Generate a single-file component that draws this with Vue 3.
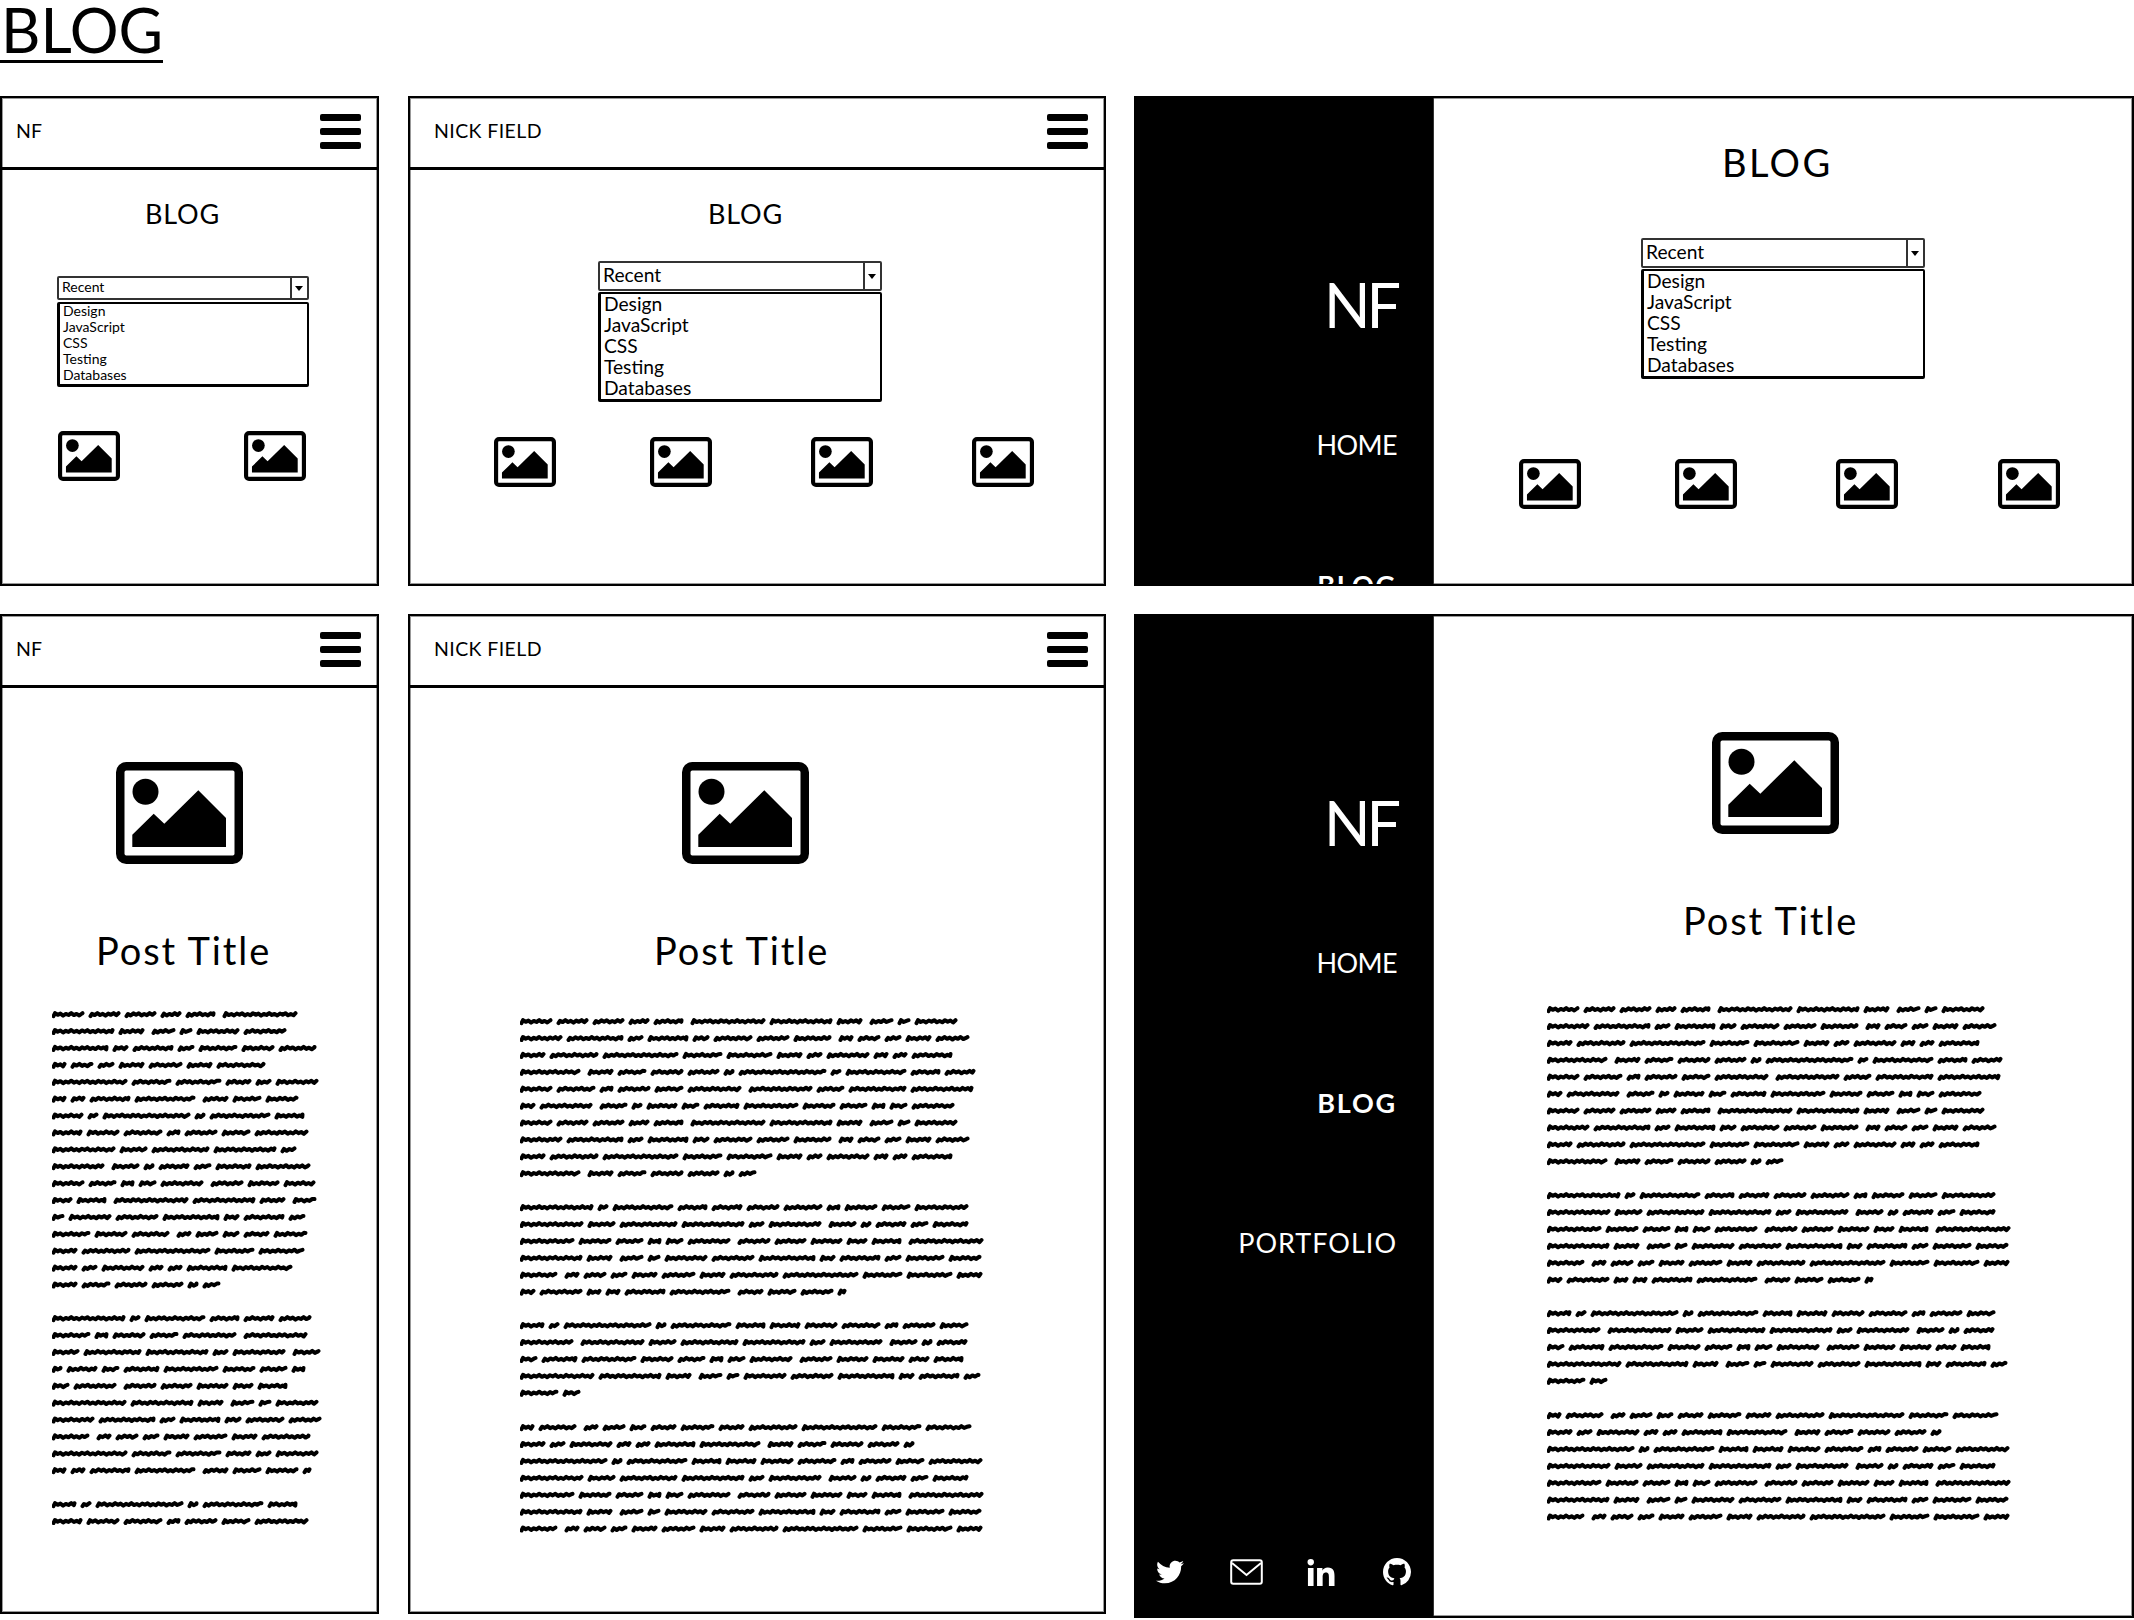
<script setup>
const S = [-32,31,31,20,29,-74,62,25,-23,12,42,42,56,15,40,16,38,32,37,-14,22,16,25,33,25,48,75,39,45,25,15,42,14,14,40,60,-25,28,32,31,10,87,10,60,29,30,32,38,13,32,28,53,-63,27,57,62,15,52,-27,10,30,17,35,54,32,27,13,17,42]
const LINE = 16.9

function wordPath(x, y, w) {
  let d = `M${x + 1.5} ${(y + 1.7).toFixed(1)}`
  let up = true
  for (let t = 3; t < w - 1.5; t += 2.7) {
    const a = 0.9 + 0.5 * Math.sin((x + t) * 0.73)
    d += `L${(x + t).toFixed(1)} ${(y + (up ? -a : a * 0.8)).toFixed(1)}`
    up = !up
  }
  return d + `L${(x + w - 1.5).toFixed(1)} ${(y - 1.2).toFixed(1)}`
}

function paragraph({ start, count, first, last }, limit) {
  const words = []
  for (let i = 0; i < count; i++) words.push(S[(start + i) % S.length])
  if (first) words[0] = first
  if (last) words.push(last)
  let x = 0
  let line = 0
  let d = ''
  words.forEach((raw, i) => {
    const w = Math.abs(raw)
    const gap = raw < 0 ? 8 : 5
    if (i > 0 && x + gap + w > limit) {
      line++
      x = 0
    } else if (i > 0) {
      x += gap
    }
    d += wordPath(x, LINE * line + LINE / 2, w)
    x += w
  })
  return { d, height: (line + 1) * LINE, width: limit }
}

const longParas = [
  { start: 0, count: 110, last: 17 },
  { start: 41, count: 67, first: 73, last: 8 },
  { start: 39, count: 47, first: 24, last: 17 },
  { start: 17, count: 82, first: 14 }
]
const shortParas = [
  { start: 0, count: 110, last: 17 },
  { start: 41, count: 67, first: 73, last: 8 },
  { start: 39, count: 13, first: 24 }
]
const narrow = shortParas.map((p) => paragraph(p, 270))
const wide = longParas.map((p) => paragraph(p, 466))

const frames = [
  { id: 'a', size: 'small', kind: 'list', brand: 'NF', pics: 2 },
  { id: 'b', size: 'mid', kind: 'list', brand: 'NICK FIELD', pics: 4 },
  { id: 'c', size: 'wide', kind: 'list', pics: 4 },
  { id: 'd', size: 'small', kind: 'post', brand: 'NF', paras: narrow },
  { id: 'e', size: 'mid', kind: 'post', brand: 'NICK FIELD', paras: wide },
  { id: 'f', size: 'wide', kind: 'post', paras: wide }
]
const options = ['Design', 'JavaScript', 'CSS', 'Testing', 'Databases']
const nav = ['HOME', 'BLOG', 'PORTFOLIO']
</script>

<template>
  <div class="page">
    <svg class="defs" aria-hidden="true">
      <symbol id="pic" viewBox="0 0 127 102">
        <rect x="4.25" y="4.25" width="118.5" height="93.5" rx="6" fill="#fff" stroke="#000" stroke-width="8.5" />
        <circle cx="29.5" cy="29.7" r="13" fill="#000" />
        <path d="M16.3 85V72.7L37.7 51.7 48.3 61.7 82.3 28.3 110 56V85Z" fill="#000" />
      </symbol>
    </svg>

    <h1 class="page-title">BLOG</h1>

    <div class="board">
      <section v-for="f in frames" :key="f.id" class="frame" :class="[f.size, f.kind]">
        <header v-if="f.size !== 'wide'" class="topbar">
          <span class="brand">{{ f.brand }}</span>
          <div class="burger"><span></span><span></span><span></span></div>
        </header>

        <aside v-else class="sidebar">
          <div class="side-logo">NF</div>
          <nav class="side-nav">
            <a v-for="n in nav" :key="n" :class="{ active: n === 'BLOG' }">{{ n }}</a>
          </nav>
          <div class="socials">
            <svg class="tw" viewBox="0 0 512 512"><path fill="#fff" d="M459.37 151.716c.325 4.548.325 9.097.325 13.645 0 138.72-105.583 298.558-298.558 298.558-59.452 0-114.68-17.219-161.137-47.106 8.447.974 16.568 1.299 25.34 1.299 49.055 0 94.213-16.568 130.274-44.832-46.132-.975-84.792-31.188-98.112-72.772 6.498.974 12.995 1.624 19.818 1.624 9.421 0 18.843-1.3 27.614-3.573-48.081-9.747-84.143-51.98-84.143-102.985v-1.299c13.969 7.797 30.214 12.67 47.431 13.319-28.264-18.843-46.781-51.005-46.781-87.391 0-19.492 5.197-37.36 14.294-52.954 51.655 63.675 129.3 105.258 216.365 109.807-1.624-7.797-2.599-15.918-2.599-24.04 0-57.828 46.782-104.934 104.934-104.934 30.213 0 57.502 12.67 76.67 33.137 23.715-4.548 46.456-13.32 66.599-25.34-7.798 24.366-24.366 44.833-46.132 57.827 21.117-2.273 41.584-8.122 60.426-16.243-14.292 20.791-32.161 39.308-52.628 54.253z" /></svg>
            <svg class="mail" viewBox="0 0 33 26"><rect x="1.2" y="1.2" width="30.6" height="23.6" rx="2" fill="none" stroke="#fff" stroke-width="2" /><path d="M2 4L16.5 16 31 4" fill="none" stroke="#fff" stroke-width="2" /></svg>
            <svg class="li" viewBox="0 0 448 448"><path fill="#fff" d="M100.28 448H7.4V148.9h92.88zM53.79 108.1C24.09 108.1 0 83.5 0 53.8a53.79 53.79 0 0 1 107.58 0c0 29.7-24.1 54.3-53.79 54.3zM447.9 448h-92.68V302.4c0-34.7-.7-79.2-48.29-79.2-48.29 0-55.69 37.7-55.69 76.7V448h-92.78V148.9h89.08v40.8h1.3c12.4-23.5 42.69-48.3 87.88-48.3 94 0 111.28 61.9 111.28 142.3V448z" /></svg>
            <svg class="gh" viewBox="0 0 16 16"><path fill="#fff" d="M8 0C3.58 0 0 3.58 0 8c0 3.54 2.29 6.53 5.47 7.59.4.07.55-.17.55-.38 0-.19-.01-.82-.01-1.49-2.01.37-2.53-.49-2.69-.94-.09-.23-.48-.94-.82-1.13-.28-.15-.68-.52-.01-.53.63-.01 1.08.58 1.23.82.72 1.21 1.87.87 2.33.66.07-.52.28-.87.51-1.07-1.78-.2-3.64-.89-3.64-3.95 0-.87.31-1.59.82-2.15-.08-.2-.36-1.02.08-2.12 0 0 .67-.21 2.2.82.64-.18 1.32-.27 2-.27.68 0 1.36.09 2 .27 1.53-1.04 2.2-.82 2.2-.82.44 1.1.16 1.92.08 2.12.51.56.82 1.27.82 2.15 0 3.07-1.87 3.75-3.65 3.95.29.25.54.73.54 1.48 0 1.07-.01 1.93-.01 2.2 0 .21.15.46.55.38A8.013 8.013 0 0016 8c0-4.42-3.58-8-8-8z" /></svg>
          </div>
        </aside>

        <main class="content">
          <template v-if="f.kind === 'list'">
            <h2 class="heading">BLOG</h2>
            <div class="select">
              <div class="select-value">
                <span class="select-text">Recent</span>
                <span class="select-arrow"></span>
              </div>
              <ul class="select-list">
                <li v-for="o in options" :key="o">{{ o }}</li>
              </ul>
            </div>
            <div class="pics">
              <svg v-for="n in f.pics" :key="n" class="pic"><use href="#pic" /></svg>
            </div>
          </template>
          <template v-else>
            <svg class="hero"><use href="#pic" /></svg>
            <h2 class="post-title">Post Title</h2>
            <div class="prose">
              <svg
                v-for="(p, i) in f.paras"
                :key="i"
                class="para"
                :width="p.width"
                :height="p.height"
              >
                <path :d="p.d" />
              </svg>
            </div>
          </template>
        </main>
      </section>
    </div>
  </div>
</template>

<style scoped>
.page {
  width: 2134px;
  height: 1620px;
  overflow: hidden;
  background: #fff;
  color: #000;
  font-family: Lato, "Liberation Sans", sans-serif;
}
.defs {
  position: absolute;
  width: 0;
  height: 0;
}
.page-title {
  box-sizing: border-box;
  width: 163px;
  height: 63px;
  margin: 0 0 33px;
  padding-left: 1px;
  border-bottom: 3px solid #000;
  font-size: 61px;
  font-weight: 400;
  line-height: 60px;
}
.board {
  display: grid;
  grid-template-columns: 379px 698px 999px;
  grid-template-rows: 490px 1004px;
  column-gap: 29px;
  row-gap: 28px;
  align-items: start;
}
.frame {
  box-sizing: border-box;
  border: 2px solid #000;
  overflow: hidden;
  background: #fff;
  box-shadow: inset 0 0 0 1px #999;
}
.list { height: 490px; }
.post { height: 1000px; }
.wide {
  display: flex;
  margin-left: -1px;
}
.wide.post { height: 1004px; }

.topbar {
  box-sizing: border-box;
  height: 72px;
  display: flex;
  align-items: center;
  justify-content: space-between;
  padding: 0 16px 3px 14px;
  border-bottom: 3px solid #000;
}
.mid .topbar { padding-left: 24px; }
.brand {
  font-size: 19.5px;
  line-height: 24px;
}
.mid .brand { letter-spacing: 0.4px; }
.burger {
  width: 41px;
  display: flex;
  flex-direction: column;
  gap: 7px;
}
.burger span {
  height: 7px;
  border-radius: 2px;
  background: #000;
}

.sidebar {
  box-sizing: border-box;
  flex: none;
  width: 298px;
  display: flex;
  flex-direction: column;
  padding: 177px 36px 30px 20px;
  background: #000;
  color: #fff;
  text-align: right;
  border-right: 1px solid #333;
}
.side-logo {
  flex: none;
  font-size: 61px;
  line-height: 60px;
  letter-spacing: -4px;
}
.side-nav {
  flex: none;
  display: flex;
  flex-direction: column;
  gap: 100px;
  margin-top: 90px;
  font-size: 27px;
  line-height: 40px;
}
.side-nav a:nth-child(1) { letter-spacing: -0.6px; }
.side-nav .active {
  font-weight: 700;
  letter-spacing: 1.8px;
}
.side-nav a:nth-child(3) { letter-spacing: 1px; }
.socials {
  flex: none;
  display: grid;
  grid-template-columns: 74px 76px 77px 30px;
  align-items: center;
  margin-top: auto;
}
.tw { width: 28px; height: 28px; }
.mail { width: 33px; height: 26px; }
.li { width: 30px; height: 27px; }
.gh { width: 28px; height: 28px; }

.content {
  flex: 1;
  min-width: 0;
}
.heading {
  margin: 27px 0 0 143px;
  padding-top: 1px;
  font-size: 27px;
  font-weight: 400;
  line-height: 31px;
  letter-spacing: 0.8px;
}
.mid .heading { margin-left: 298px; }
.wide .heading {
  margin: 42px 0 0 288px;
  padding-top: 0;
  font-size: 38px;
  line-height: 44px;
  letter-spacing: 2.4px;
}

.select {
  box-sizing: border-box;
  width: 252px;
  margin: 47px 0 0 55px;
  font-size: 14px;
}
.mid .select {
  width: 284px;
  margin: 32px 0 0 188px;
  font-size: 19.2px;
}
.wide .select {
  width: 284px;
  margin: 54px 0 0 207px;
  font-size: 19.2px;
}
.select-value {
  box-sizing: border-box;
  display: flex;
  justify-content: space-between;
  height: 24px;
  border: 2px solid #333;
  border-radius: 2px;
}
.mid .select-value,
.wide .select-value { height: 30px; }
.select-text {
  align-self: center;
  margin-top: -3px;
  padding-left: 3px;
}
.select-arrow {
  box-sizing: border-box;
  position: relative;
  width: 17px;
  border-left: 2px solid #333;
}
.select-arrow::after {
  content: "";
  position: absolute;
  left: 3px;
  top: 50%;
  margin-top: -2px;
  border-style: solid;
  border-width: 5px 4.5px 0;
  border-color: #000 transparent transparent;
}
.select-list {
  box-sizing: border-box;
  height: 85px;
  margin: 2px 0 0;
  padding: 0 0 0 3px;
  border: 2px solid #000;
  border-bottom-width: 3px;
  border-left-width: 3px;
  border-radius: 2px;
  list-style: none;
  line-height: 16px;
}
.select-list li:first-child { margin-top: -1px; }
.mid .select-list,
.wide .select-list {
  height: 110px;
  margin-top: 1px;
  line-height: 21px;
}

.pics {
  display: flex;
  gap: 124px;
  margin: 44px 0 0 56px;
}
.mid .pics {
  gap: 100px;
  margin: 35px 0 0 84px;
}
.wide .pics {
  gap: 100px;
  margin: 80px 0 0 85px;
}
.pic {
  width: 62px;
  height: 50px;
  flex: none;
}
.mid .pic:nth-child(2),
.wide .pic:nth-child(2) { margin-left: -6px; }
.mid .pic:nth-child(3),
.wide .pic:nth-child(3) { margin-left: -1px; }
.mid .pic:nth-child(4) { margin-left: -1px; }

.hero {
  display: block;
  width: 127px;
  height: 102px;
  margin: 74px 0 0 114px;
}
.mid .hero { margin-left: 272px; }
.wide .hero { margin: 116px 0 0 278px; }
.post-title {
  margin: 63px 0 0 94px;
  font-size: 38px;
  font-weight: 400;
  line-height: 46px;
  letter-spacing: 1.9px;
  white-space: nowrap;
}
.mid .post-title { margin-left: 244px; }
.wide .post-title { margin: 63px 0 0 249px; }
.prose {
  margin: 33px 0 0 50px;
}
.mid .prose { margin: 40px 0 0 110px; }
.wide .prose { margin: 58px 0 0 113px; }
.para {
  display: block;
  margin-bottom: 16.9px;
}
.para path {
  fill: none;
  stroke: #000;
  stroke-width: 4;
  stroke-linecap: round;
  stroke-linejoin: round;
}
</style>
